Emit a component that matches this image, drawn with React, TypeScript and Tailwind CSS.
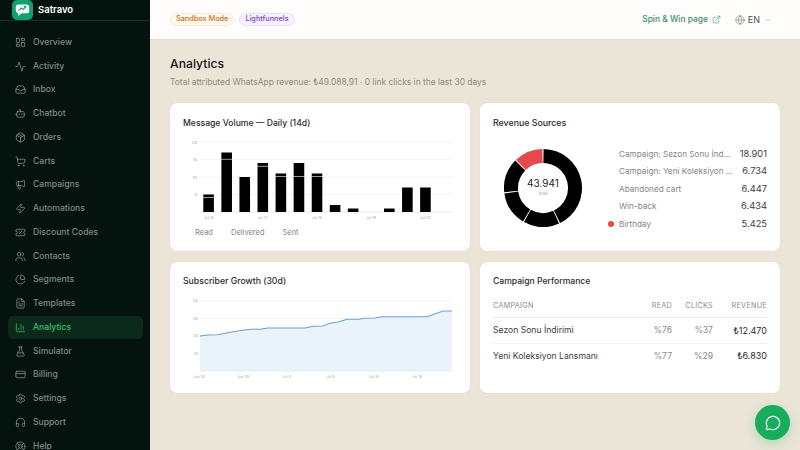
import React from 'react';
import {
  Activity, Bot, ChartColumn, ChartPie, ChevronDown, CreditCard, ExternalLink, FileText, FlaskConical,
  Globe, Headphones, Inbox, LayoutDashboard, LifeBuoy, Megaphone, MessageCircle, Package, Settings, ShoppingCart, TicketPercent,
  Users, Zap,
} from 'lucide-react';

const navItems = [
  { label: 'Overview', icon: LayoutDashboard },
  { label: 'Activity', icon: Activity },
  { label: 'Inbox', icon: Inbox },
  { label: 'Chatbot', icon: Bot },
  { label: 'Orders', icon: Package },
  { label: 'Carts', icon: ShoppingCart },
  { label: 'Campaigns', icon: Megaphone },
  { label: 'Automations', icon: Zap },
  { label: 'Discount Codes', icon: TicketPercent },
  { label: 'Contacts', icon: Users },
  { label: 'Segments', icon: ChartPie },
  { label: 'Templates', icon: FileText },
  { label: 'Analytics', icon: ChartColumn, active: true },
  { label: 'Simulator', icon: FlaskConical },
  { label: 'Billing', icon: CreditCard },
  { label: 'Settings', icon: Settings },
  { label: 'Support', icon: Headphones },
  { label: 'Help', icon: LifeBuoy },
];

const bars = [
  [4, 1], [15, 2], [10, 0], [13, 1], [10, 1], [10, 4], [10, 1], [2, 0], [1, 0], [0, 0], [1, 0], [7, 0], [7, 0],
];

const sources = [
  { name: 'Campaign: Sezon Sonu İnd...', value: '18.901', n: 18901 },
  { name: 'Campaign: Yeni Koleksiyon ...', value: '6.734', n: 6734 },
  { name: 'Abandoned cart', value: '6.447', n: 6447 },
  { name: 'Win-back', value: '6.434', n: 6434 },
  { name: 'Birthday', value: '5.425', n: 5425, color: '#e5484d' },
];

const growth = [
  [0, 36], [8, 35], [18, 34.7], [33, 31.7], [50, 29.3], [60, 29.3], [68, 28], [105, 28], [113, 26.3], [123, 26], [130, 23.3],
  [138, 22], [147, 19.3], [158, 19.3], [165, 18.3], [175, 18], [182, 16.7], [227, 16.7], [243, 11], [252, 11],
];

function Sidebar() {
  return (
    <aside className="w-[150px] h-[450px] shrink-0 bg-[#04130e] overflow-hidden">
      <div className="h-[21px] flex items-center gap-[5px] pl-[12px] border-b border-[#1d2c26]">
        <div className="w-[21px] h-[20px] rounded-[5px] bg-[#12a06f] flex items-center justify-center">
          <svg width="15" height="14" viewBox="0 0 15 14">
            <path d="M3.4 1.5h8.2a2.6 2.6 0 0 1 2.6 2.6v3.6a2.6 2.6 0 0 1-2.6 2.6H6.5L3.2 13v-2.75A2.6 2.6 0 0 1 .8 7.7V4.1a2.6 2.6 0 0 1 2.6-2.6z" fill="#fff" />
            <path d="M3.6 7.6l2.6-2.5 1.7 1.4 2.9-2.8M8.8 3.5h1.8v1.8" fill="none" stroke="#12a06f" strokeWidth="1.1" />
          </svg>
        </div>
        <span className="text-[9.5px] font-semibold text-white">Satravo</span>
      </div>
      <nav className="flex flex-col pt-[10px] pl-[8px] pr-[7px]">
        {navItems.map((item) => (
          <div
            key={item.label}
            className={`h-[22.75px] mb-[1px] shrink-0 flex items-center gap-[7px] pl-[7px] rounded-[5px] text-[8.6px] font-medium ${
              item.active ? 'bg-[#0c2a1c] text-[#38c06c]' : 'text-[#808a85]'
            }`}
          >
            <item.icon size={11} strokeWidth={1.5} className={item.active ? '' : 'text-[#98a19d]'} />
            <span>{item.label}</span>
          </div>
        ))}
      </nav>
    </aside>
  );
}

function Header() {
  return (
    <header className="h-[40px] shrink-0 bg-[#fffdfb] border-b border-[#e0dccf] flex items-center justify-between pl-[20px] pr-[28px]">
      <div className="flex items-center gap-[5px] text-[7.3px] font-medium">
        <span className="h-[13px] px-[5px] flex items-center rounded-full bg-[#fff9ec] border border-[#f6ecd5] text-[#c9702c]">Sandbox Mode</span>
        <span className="h-[13px] px-[5px] flex items-center rounded-full bg-[#f7f2ff] border border-[#e9e0fb] text-[#7a3fd0]">Lightfunnels</span>
      </div>
      <div className="flex items-center">
        <span className="text-[8.4px] font-medium text-[#3b8f6b]">Spin &amp; Win page</span>
        <ExternalLink size={9} strokeWidth={1.5} className="ml-[4px] text-[#3b8f6b]" />
        <Globe size={10} strokeWidth={1.3} className="ml-[14px] text-[#6b6f6c]" />
        <span className="ml-[3px] text-[9px] text-[#4f5352]">EN</span>
        <ChevronDown size={8} strokeWidth={1.4} className="ml-[4px] text-[#8a8d8b]" />
      </div>
    </header>
  );
}

function VolumeChart() {
  return (
    <svg width="274" height="78" viewBox="0 0 274 78" className="block overflow-visible">
      {[0, 17.5, 35, 52.5].map((y, i) => (
        <g key={y}>
          <line x1="17" x2="269" y1={y + 1} y2={y + 1} stroke="#f0efeb" strokeWidth="0.7" />
          <text x="14" y={y + 2.5} textAnchor="end" fontSize="4" fill="#a5a5a0">{[20, 15, 10, 5][i]}</text>
        </g>
      ))}
      <line x1="17" x2="269" y1="71" y2="71" stroke="#e6e5e0" strokeWidth="0.8" />
      {bars.map(([a, b], i) => {
        const x = 20.3 + i * 18.07;
        const h = a * 3.5;
        const h2 = b * 3.5;
        return (
          <g key={i}>
            {a > 0 && <rect x={x} y={71 - h} width="10.6" height={h} fill="#000" />}
            {b > 0 && <rect x={x} y={71 - h - h2} width="10.6" height={h2 - 0.6} fill="#000" />}
          </g>
        );
      })}
      {[['Jul 10', 26], ['Jul 13', 79.7], ['Jul 16', 134], ['Jul 19', 188], ['Jul 22', 242.7]].map(([t, x]) => (
        <text key={t} x={x} y="77.5" textAnchor="middle" fontSize="3.6" fill="#a5a5a0">{t}</text>
      ))}
    </svg>
  );
}

function Donut() {
  const total = sources.reduce((s, d) => s + d.n, 0);
  const R = 39;
  const r = 25;
  const pt = (rad: number, a: number) => `${rad * Math.sin(a)} ${-rad * Math.cos(a)}`;
  let start = 0;
  const segs = sources.map((d) => {
    const a0 = start + 0.015;
    const a1 = start + (d.n / total) * Math.PI * 2 - 0.015;
    start += (d.n / total) * Math.PI * 2;
    const large = a1 - a0 > Math.PI ? 1 : 0;
    return {
      key: d.name,
      fill: d.color ?? '#000',
      d: `M${pt(R, a0)} A${R} ${R} 0 ${large} 1 ${pt(R, a1)} L${pt(r, a1)} A${r} ${r} 0 ${large} 0 ${pt(r, a0)} Z`,
    };
  });
  return (
    <div className="relative w-[78px] h-[78px] shrink-0">
      <svg width="78" height="78" viewBox="-39 -39 78 78">
        {segs.map((s) => <path key={s.key} d={s.d} fill={s.fill} />)}
      </svg>
      <div className="absolute inset-0 flex flex-col items-center justify-center">
        <span className="text-[10px] leading-[12px] text-[#1a1c1b] mt-[-2px]">43.941</span>
        <span className="text-[4.5px] leading-[6px] mt-[2.3px] text-[#a5a5a0]">total</span>
      </div>
    </div>
  );
}

function GrowthChart() {
  const line = growth.map(([x, y]) => `${x},${y}`).join(' ');
  return (
    <svg width="274" height="80" viewBox="-17 0 274 80" className="block overflow-visible">
      {[[1, 50], [18.5, 35], [36, 25], [53.5, 15]].map(([y, t]) => (
        <g key={t}>
          <line x1="0" x2="252" y1={y} y2={y} stroke="#f0efeb" strokeWidth="0.7" />
          <text x="-2" y={y + 1.3} textAnchor="end" fontSize="4" fill="#a5a5a0">{t}</text>
        </g>
      ))}
      <polygon points={`0,71 ${line} 252,71`} fill="#eaf2fb" />
      <polyline points={line} fill="none" stroke="#6a9fd4" strokeWidth="1.1" />
      <line x1="0" x2="252" y1="71" y2="71" stroke="#dfe6ee" strokeWidth="0.7" />
      {[['Jun 24', -0.7], ['Jun 29', 43], ['Jul 4', 86.7], ['Jul 9', 130.7], ['Jul 14', 174], ['Jul 19', 217]].map(([t, x]) => (
        <text key={t} x={x} y="77.5" textAnchor="middle" fontSize="3.6" fill="#a5a5a0">{t}</text>
      ))}
    </svg>
  );
}

export default function App() {
  return (
    <div className="w-[800px] h-[450px] overflow-hidden flex bg-[#ebe5d7] text-[#1a1c1b] relative" style={{ fontFamily: 'Inter, "Liberation Sans", sans-serif' }}>
      <Sidebar />
      <div className="flex-1 flex flex-col min-w-0">
        <Header />
        <main className="pl-[20px] pr-[20px] pt-[15px]">
          <h1 className="text-[12.2px] leading-[18px] font-medium text-[#121413]">Analytics</h1>
          <p className="mt-[3px] text-[8.45px] leading-[12px] text-[#8b8b84]">
            Total attributed WhatsApp revenue: ₺49.088,91 · 0 link clicks in the last 30 days
          </p>
          <div className="mt-[15px] grid grid-cols-[300px_300px] grid-rows-[148px_131px] gap-x-[10px] gap-y-[11px]">
            <section className="bg-white rounded-[7px] shadow-[0_0_1px_#cfc9b8] pt-[14px] pl-[13px]">
              <h2 className="text-[8.6px] leading-[12px] font-medium text-[#2a2c2b]">Message Volume — Daily (14d)</h2>
              <div className="mt-[12px]"><VolumeChart /></div>
              <div className="mt-[9px] pl-[12px] flex gap-[18px] text-[7.5px] leading-[10px] text-[#85857f]">
                <span>Read</span>
                <span>Delivered</span>
                <span>Sent</span>
              </div>
            </section>
            <section className="bg-white rounded-[7px] shadow-[0_0_1px_#cfc9b8] pt-[14px] pl-[13px] pr-[13px]">
              <h2 className="text-[8.8px] leading-[12px] font-medium text-[#2a2c2b]">Revenue Sources</h2>
              <div className="mt-[14px] flex items-center">
                <div className="ml-[11px]"><Donut /></div>
                <div className="ml-[37px] mt-[2px] flex-1 flex flex-col">
                  {sources.map((s) => (
                    <div key={s.name} className="relative h-[17.5px] flex items-center justify-between">
                      {s.color && <span className="absolute left-[-11px] w-[6px] h-[6px] rounded-full bg-[#e5484d]" />}
                      <span className="text-[8.2px] text-[#85857f] whitespace-nowrap">{s.name}</span>
                      <span className="text-[9.3px] text-[#3a3c3b]">{s.value}</span>
                    </div>
                  ))}
                </div>
              </div>
            </section>
            <section className="bg-white rounded-[7px] shadow-[0_0_1px_#cfc9b8] pt-[13px] pl-[13px]">
              <h2 className="text-[8.7px] leading-[12px] font-medium text-[#2a2c2b]">Subscriber Growth (30d)</h2>
              <div className="mt-[13px]"><GrowthChart /></div>
            </section>
            <section className="bg-white rounded-[7px] shadow-[0_0_1px_#cfc9b8] pt-[13px] px-[13px]">
              <h2 className="text-[8.6px] leading-[12px] font-medium text-[#2a2c2b]">Campaign Performance</h2>
              <table className="mt-[8.5px] w-full text-[8.6px]">
                <thead>
                  <tr className="h-[22px] border-b border-[#ebebe6] text-[7.2px] text-[#8b8b84] tracking-[0.3px]">
                    <th className="text-left font-normal">CAMPAIGN</th>
                    <th className="w-[40px] text-right font-normal">READ</th>
                    <th className="w-[41px] text-right font-normal">CLICKS</th>
                    <th className="w-[54px] text-right font-normal">REVENUE</th>
                  </tr>
                </thead>
                <tbody>
                  <tr className="h-[25.5px] border-b border-[#f0f0ec]">
                    <td className="text-[#3a3c3b]">Sezon Sonu İndirimi</td>
                    <td className="text-right text-[#8b8b84]">%76</td>
                    <td className="text-right text-[#8b8b84]">%37</td>
                    <td className="text-right text-[9px] text-[#2a2c2b]">₺12.470</td>
                  </tr>
                  <tr className="h-[25.5px]">
                    <td className="text-[#3a3c3b]">Yeni Koleksiyon Lansmanı</td>
                    <td className="text-right text-[#8b8b84]">%77</td>
                    <td className="text-right text-[#8b8b84]">%29</td>
                    <td className="text-right text-[9px] text-[#2a2c2b]">₺6.830</td>
                  </tr>
                </tbody>
              </table>
            </section>
          </div>
        </main>
      </div>
      <button className="absolute left-[755px] top-[405px] w-[35px] h-[35px] rounded-full bg-[#17ad5c] shadow-[0_4px_12px_rgba(23,173,92,0.25)] flex items-center justify-center text-white" aria-label="Chat">
        <MessageCircle size={16} strokeWidth={1.7} />
      </button>
    </div>
  );
}
